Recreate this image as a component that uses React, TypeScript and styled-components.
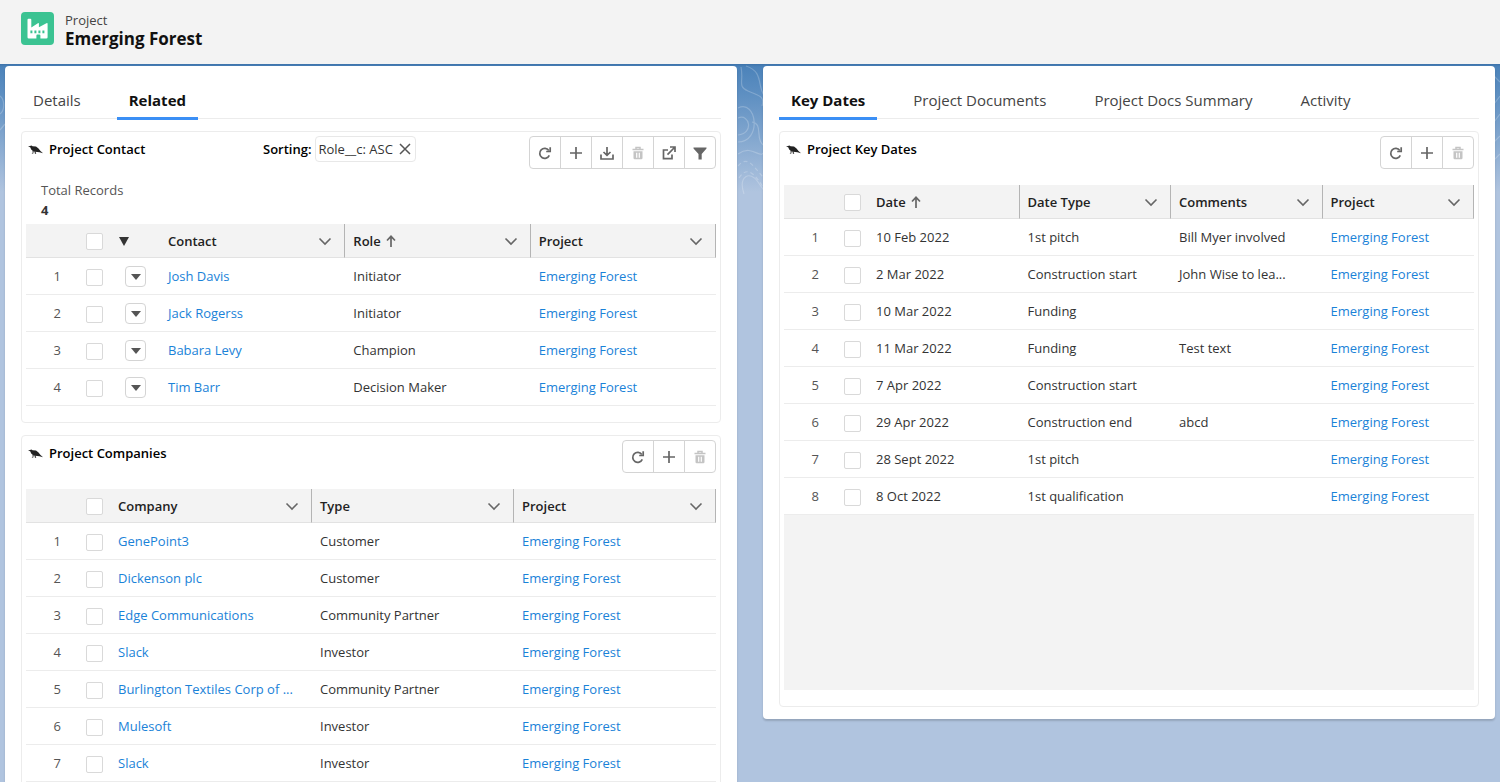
import React from "react";
import styled, { createGlobalStyle } from "styled-components";

const GlobalStyle = createGlobalStyle`
  *, *::before, *::after { box-sizing: border-box; }
  body {
    margin: 0;
    background: #b0c4df;
    color: #333;
    font: 13px/20px "Open Sans", "Noto Sans", sans-serif;
  }
  h1, h2, p { margin: 0; }
  button { font: inherit; color: inherit; padding: 0; cursor: pointer; }
  a { color: #1a82d8; text-decoration: none; }
`;

const Page = styled.div`
  height: 100vh;
  overflow: hidden;
  display: flex;
  flex-direction: column;
`;

const Header = styled.header`
  display: flex;
  flex: none;
  gap: 11px;
  height: 64px;
  padding: 12px 21px;
  background: #f3f3f3;
`;

const ObjectIcon = styled.span`
  display: flex;
  width: 33px;
  height: 33px;
  border-radius: 4px;
  background: #3bc392;
`;

const Eyebrow = styled.p`
  font-size: 13px;
  line-height: 16px;
  color: #444;
`;

const PageTitle = styled.h1`
  font-size: 17px;
  line-height: 22px;
  font-weight: 700;
  color: #111;
`;

const Main = styled.main`
  position: relative;
  flex: 1;
  min-height: 0;
  display: grid;
  grid-template-columns: minmax(0, 1fr) minmax(0, 1fr);
  align-items: start;
  gap: 26px;
  padding: 2px 5px;
  background: linear-gradient(#3d73aa 0, #4c83ba 3px, #5f90c2 32px, #b0c4df 128px);
`;

const Contours = styled.svg`
  position: absolute;
  top: 0;
  left: 0;
  width: 100%;
  height: 150px;
`;

const Panel = styled.section`
  position: relative;
  padding: 16px 16px 12px;
  background: #fff;
  border-radius: 4px;
  box-shadow: 0 2px 2px rgba(0, 0, 0, 0.16);
`;

const TabList = styled.div`
  display: flex;
  gap: 24px;
  margin-bottom: 12px;
  border-bottom: 1px solid #ececec;
`;

const Tab = styled.button<{ $active?: boolean }>`
  height: 38px;
  margin-bottom: -2px;
  padding: 0 12px;
  border: 0;
  border-bottom: 3px solid ${(p) => (p.$active ? "#3b8ff5" : "transparent")};
  background: none;
  font-size: 15px;
  line-height: 36px;
  font-weight: ${(p) => (p.$active ? 700 : 400)};
  color: ${(p) => (p.$active ? "#111" : "#444")};
`;

const Card = styled.article`
  padding: 4px 4px 16px;
  border: 1px solid #ececec;
  border-radius: 4px;
  & + & { margin-top: 12px; }
`;

const CardHead = styled.div<{ $compact?: boolean }>`
  display: flex;
  align-items: flex-start;
  justify-content: space-between;
  height: ${(p) => (p.$compact ? 44 : 49)}px;
`;

const CardTitle = styled.h2`
  display: flex;
  align-items: center;
  gap: 6px;
  width: 237px;
  padding: 3px 2px;
  font-size: 13px;
  line-height: 20px;
  font-weight: 600;
  color: #000;
`;

const Sorting = styled.div`
  display: flex;
  flex: 1;
  gap: 4px;
  font-weight: 600;
  line-height: 26px;
  color: #000;
`;

const Pill = styled.span`
  display: flex;
  align-items: center;
  gap: 5px;
  height: 26px;
  padding: 0 3px 0 2px;
  border: 1px solid #e8e8e8;
  border-radius: 4px;
  font-weight: 400;
  color: #333;
`;

const PillClose = styled.button`
  display: flex;
  border: 0;
  background: none;
  color: #555;
`;

const Actions = styled.div`
  display: flex;
`;

const ActionButton = styled.button`
  display: flex;
  align-items: center;
  justify-content: center;
  width: 32px;
  height: 33px;
  border: 1px solid #d4d4d4;
  background: #fff;
  color: #666;
  & + & { margin-left: -1px; }
  &:first-child { border-radius: 4px 0 0 4px; }
  &:last-child { border-radius: 0 4px 4px 0; }
  &:disabled { color: #c4c4c4; }
`;

const Summary = styled.div`
  padding: 0 15px 4px;
  color: #555;
`;

const SummaryValue = styled.strong`
  display: block;
  color: #333;
`;

const Table = styled.table`
  width: 100%;
  table-layout: fixed;
  border-collapse: separate;
  border-spacing: 0;
`;

const Col = styled.col<{ $width?: number }>`
  width: ${(p) => (p.$width ? `${p.$width}px` : "auto")};
`;

const HeadCell = styled.th<{ $divider?: boolean }>`
  height: 34px;
  padding: 0 8px;
  background: #f3f3f3;
  border-bottom: 1px solid #e2e2e2;
  border-right: ${(p) => (p.$divider ? "1px solid #b4b4b4" : "0")};
  text-align: left;
  font-weight: 600;
  color: #222;
`;

const HeadLabel = styled.span`
  display: flex;
  align-items: center;
  gap: 4px;
`;

const MenuIcon = styled.svg`
  margin-left: auto;
  margin-right: 4px;
`;

const Cell = styled.td`
  height: 37px;
  padding: 0 8px;
  border-bottom: 1px solid #ececec;
  overflow: hidden;
  text-overflow: ellipsis;
  white-space: nowrap;
`;

const NumberCell = styled(Cell)`
  padding: 0 17px 0 0;
  text-align: right;
  color: #555;
`;

const Check = styled.input`
  appearance: none;
  display: block;
  width: 17px;
  height: 17px;
  margin: 2px 0 0;
  border: 1px solid #d9d9d9;
  border-radius: 2px;
  background: #fff;
`;

const RowMenu = styled.button`
  display: flex;
  align-items: center;
  justify-content: center;
  width: 21px;
  height: 21px;
  margin-left: 7px;
  padding-top: 2px;
  border: 1px solid #d4d4d4;
  border-radius: 4px;
  background: #fff;
  color: #555;
`;

const Filler = styled.div`
  height: 175px;
  background: #f3f3f3;
`;

const FactoryIcon = () => (
  <svg width="33" height="33" viewBox="0 0 33 33" aria-hidden="true">
    <path
      fill="#fff"
      fillRule="evenodd"
      d="M6.500 7.800q0-1 1-1h1.800q1 0 1 1V15.600l6.600-4.400q1-.6 1 .5v3.600l7.500-4.100q1.200-.6 1.200.6V25.300q0 1.300-1.300 1.300H19.400V23.500q0-1-1-1h-2q-1 0-1 1V26.600H7.800Q6.500 26.600 6.500 25.300ZM9.400 18.500v2.800h2v-2.800ZM13.400 18.500v2.800h2v-2.800ZM17.400 18.500v2.800h2v-2.800ZM21.400 18.500v2.800h2v-2.800Z"
    />
  </svg>
);

const BirdIcon = () => (
  <svg width="15" height="12" viewBox="0 0 15 12" aria-hidden="true">
    <path
      fill="#222"
      d="M0 3.600 2 3 3.400 2.600 4.600 3.200 8 3.600 10.500 5.400 12.500 7.900 15 10.300 11.500 9.300 9.200 8.900 7.400 8.700 8.300 10.600 6.700 10.900 7 10.400 6.400 8.500 5.600 8.200 5.300 10.600 3.600 10.900 4.600 10.100 4.600 7.800 3.200 6.400 2.200 4.300Z"
    />
  </svg>
);

const glyphs: Record<string, React.ReactNode> = {
  Refresh: (
    <>
      <path d="M12.300 10.400A5 5 0 1 1 11.800 5.400" />
      <path d="M9.200 6.500H13.200V2.300" />
    </>
  ),
  Add: <path d="M8 2v12M2 8h12" />,
  Download: <path d="M8 2v8M4.500 7 8 10.400 11.500 7M2 9.500V14h12V9.500" />,
  Delete: (
    <>
      <path strokeWidth="1.500" d="M2.500 4.500h11M6 4.500V2.500h4v2" />
      <path fill="currentColor" stroke="none" fillRule="evenodd" d="M3.500 6.300h9V13q0 1.200-1.200 1.200H4.700Q3.500 14.200 3.500 13ZM6.100 7.800v4.900h1.200V7.800ZM8.700 7.800v4.900h1.200V7.800Z" />
    </>
  ),
  Open: <path d="M7 5H2.500v8.700H11V9.500M9 2h5v5M14 2 6.500 9.700" />,
  Filter: <path fill="currentColor" stroke="none" d="M1.500 2.500h13v1L9.700 9v5.500H6.500V9L1.500 3.500Z" />,
};

const Glyph = ({ name }: { name: string }) => (
  <svg width="16" height="16" viewBox="0 0 16 16" fill="none" stroke="currentColor" strokeWidth="1.700" aria-hidden="true">
    {glyphs[name]}
  </svg>
);

const Toolbar = ({ names }: { names: string[] }) => (
  <Actions>
    {names.map((name) => (
      <ActionButton key={name} type="button" aria-label={name} disabled={name === "Delete"}>
        <Glyph name={name} />
      </ActionButton>
    ))}
  </Actions>
);

const Title = ({ children }: { children: string }) => (
  <CardTitle>
    <BirdIcon />
    {children}
  </CardTitle>
);

type Column = { label: string; sorted?: boolean; link?: boolean };

const DataTable = ({ columns, rows, rowMenu }: { columns: Column[]; rows: string[][]; rowMenu?: boolean }) => (
  <Table>
    <colgroup>
      <Col $width={52} />
      <Col $width={32} />
      {rowMenu && <Col $width={50} />}
      {columns.map((c) => (
        <Col key={c.label} />
      ))}
    </colgroup>
    <thead>
      <tr>
        <HeadCell />
        <HeadCell>
          <Check type="checkbox" aria-label="Select all rows" />
        </HeadCell>
        {rowMenu && (
          <HeadCell>
            <svg width="12" height="10" viewBox="0 0 12 10" aria-hidden="true">
              <path fill="#333" d="M1 1h10L6 10Z" />
            </svg>
          </HeadCell>
        )}
        {columns.map((c) => (
          <HeadCell key={c.label} scope="col" $divider>
            <HeadLabel>
              {c.label}
              {c.sorted && (
                <svg width="12" height="14" viewBox="0 0 12 14" fill="none" stroke="#666" strokeWidth="1.700" aria-hidden="true">
                  <path d="M6 13V2.500M2 6.500 6 2.300 10 6.500" />
                </svg>
              )}
              {!(c.sorted && !rowMenu) && (
                <MenuIcon width="14" height="10" viewBox="0 0 14 10" fill="none" stroke="#666" strokeWidth="1.600" aria-hidden="true">
                  <path d="M1.500 2.500 7 8 12.500 2.500" />
                </MenuIcon>
              )}
            </HeadLabel>
          </HeadCell>
        ))}
      </tr>
    </thead>
    <tbody>
      {rows.map((row, i) => (
        <tr key={i}>
          <NumberCell>{i + 1}</NumberCell>
          <Cell>
            <Check type="checkbox" aria-label={`Select row ${i + 1}`} />
          </Cell>
          {rowMenu && (
            <Cell>
              <RowMenu type="button" aria-label={`Actions for row ${i + 1}`}>
                <svg width="10" height="6" viewBox="0 0 10 6" aria-hidden="true">
                  <path fill="currentColor" d="M0 0h10L5 6Z" />
                </svg>
              </RowMenu>
            </Cell>
          )}
          {row.map((value, j) => (
            <Cell key={j}>{columns[j].link ? <a href="#record">{value}</a> : value}</Cell>
          ))}
        </tr>
      ))}
    </tbody>
  </Table>
);

const Tabs = ({ items, active }: { items: string[]; active: string }) => (
  <TabList role="tablist">
    {items.map((item) => (
      <Tab key={item} type="button" role="tab" aria-selected={item === active} $active={item === active}>
        {item}
      </Tab>
    ))}
  </TabList>
);

const P = "Emerging Forest";

const contacts = [
  ["Josh Davis", "Initiator", P],
  ["Jack Rogerss", "Initiator", P],
  ["Babara Levy", "Champion", P],
  ["Tim Barr", "Decision Maker", P],
];

const companies = [
  ["GenePoint3", "Customer", P],
  ["Dickenson plc", "Customer", P],
  ["Edge Communications", "Community Partner", P],
  ["Slack", "Investor", P],
  ["Burlington Textiles Corp of ...", "Community Partner", P],
  ["Mulesoft", "Investor", P],
  ["Slack", "Investor", P],
];

const keyDates = [
  ["10 Feb 2022", "1st pitch", "Bill Myer involved", P],
  ["2 Mar 2022", "Construction start", "John Wise to lea...", P],
  ["10 Mar 2022", "Funding", "", P],
  ["11 Mar 2022", "Funding", "Test text", P],
  ["7 Apr 2022", "Construction start", "", P],
  ["29 Apr 2022", "Construction end", "abcd", P],
  ["28 Sept 2022", "1st pitch", "", P],
  ["8 Oct 2022", "1st qualification", "", P],
];

export default function App() {
  return (
    <Page>
      <GlobalStyle />
      <Header>
        <ObjectIcon>
          <FactoryIcon />
        </ObjectIcon>
        <div>
          <Eyebrow>Project</Eyebrow>
          <PageTitle>Emerging Forest</PageTitle>
        </div>
      </Header>
      <Main>
        <Contours viewBox="0 0 1500 150" preserveAspectRatio="xMidYMin slice" fill="none" stroke="#fff" strokeOpacity="0.22" strokeWidth="1.200" aria-hidden="true">
          <path d="M741 3C744 18 737 22 748 27S765 32 762 42M738 44C757 35 762 78 738 78M738 54C750 49 754 70 738 71M746 2C765 8 756 24 766 34M738 90C755 78 762 102 766 82M752 58C765 60 752 78 768 84" />
          <path strokeDasharray="4 3" d="M738 102C748 90 754 104 764 114M739 114C748 100 756 112 765 126" />
          <path d="M744 130C738 112 750 106 758 118S766 130 768 120M0 32C5 36 5 46 0 50M0 66 5 60M1494 12 1500 18M1494 40 1500 32M1494 58 1500 50M1494 78 1500 72M1494 96 1500 90" />
        </Contours>
        <Panel>
          <Tabs items={["Details", "Related"]} active="Related" />
          <Card>
            <CardHead $compact>
              <Title>Project Contact</Title>
              <Sorting>
                Sorting:
                <Pill>
                  Role__c: ASC
                  <PillClose type="button" aria-label="Remove sorting">
                    <svg width="14" height="14" viewBox="0 0 14 14" fill="none" stroke="currentColor" strokeWidth="1.500" aria-hidden="true">
                      <path d="M2 2 12 12M12 2 2 12" />
                    </svg>
                  </PillClose>
                </Pill>
              </Sorting>
              <Toolbar names={["Refresh", "Add", "Download", "Delete", "Open", "Filter"]} />
            </CardHead>
            <Summary>
              Total Records
              <SummaryValue>4</SummaryValue>
            </Summary>
            <DataTable
              rowMenu
              columns={[{ label: "Contact", link: true }, { label: "Role", sorted: true }, { label: "Project", link: true }]}
              rows={contacts}
            />
          </Card>
          <Card>
            <CardHead>
              <Title>Project Companies</Title>
              <Toolbar names={["Refresh", "Add", "Delete"]} />
            </CardHead>
            <DataTable
              columns={[{ label: "Company", link: true }, { label: "Type" }, { label: "Project", link: true }]}
              rows={companies}
            />
          </Card>
        </Panel>
        <Panel>
          <Tabs items={["Key Dates", "Project Documents", "Project Docs Summary", "Activity"]} active="Key Dates" />
          <Card>
            <CardHead>
              <Title>Project Key Dates</Title>
              <Toolbar names={["Refresh", "Add", "Delete"]} />
            </CardHead>
            <DataTable
              columns={[{ label: "Date", sorted: true }, { label: "Date Type" }, { label: "Comments" }, { label: "Project", link: true }]}
              rows={keyDates}
            />
            <Filler />
          </Card>
        </Panel>
      </Main>
    </Page>
  );
}
